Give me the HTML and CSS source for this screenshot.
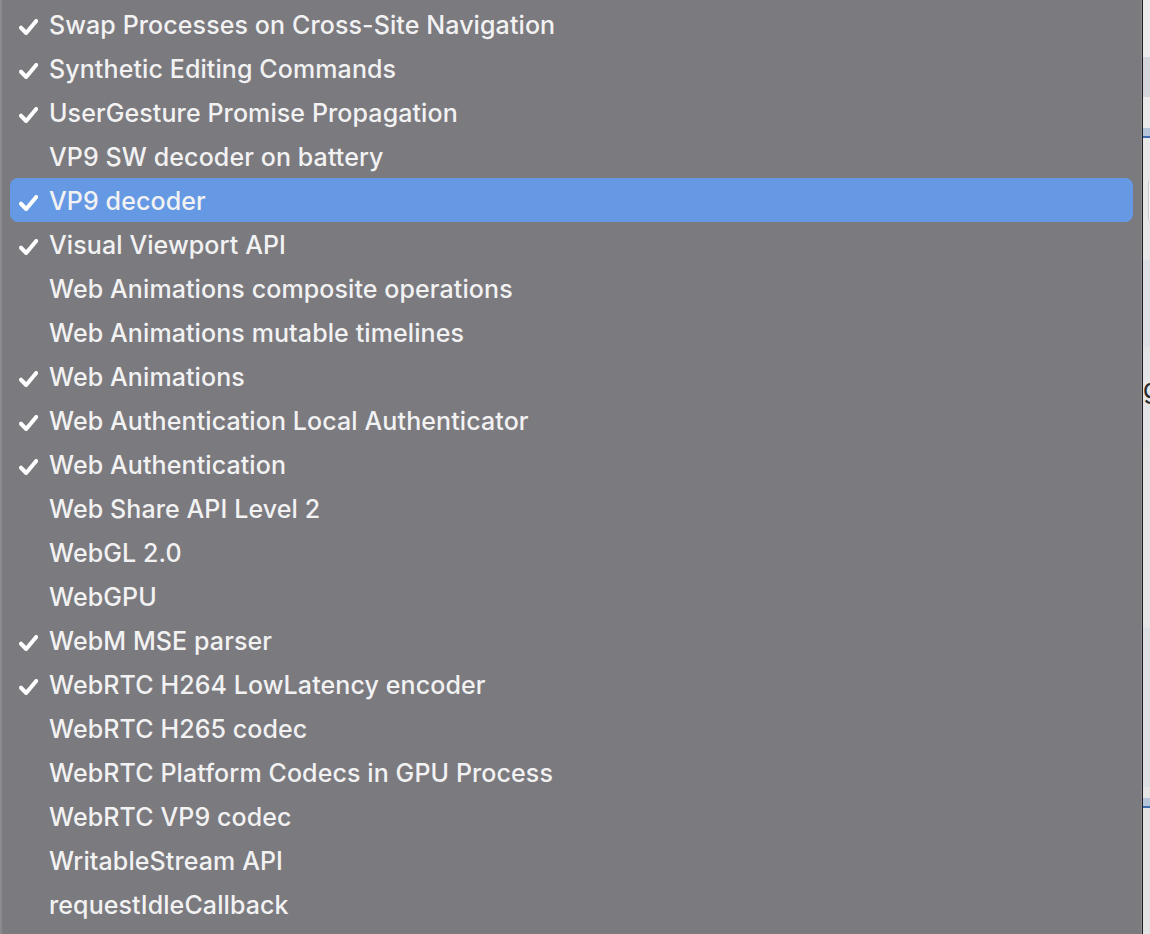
FILE: index.html
```html
<!DOCTYPE html>
<html>
<head>
<meta charset="utf-8">
<link rel="stylesheet" href="styles.css">
</head>
<body>
<div class="screen">
  <div class="menu">
    <ul class="items">
      <li class="item"><span class="check"><svg viewBox="0 0 18 15"><path d="M1.9 8.2 L6.8 13.2 L16.3 1.8"/></svg></span><span class="label">Swap Processes on Cross-Site Navigation</span></li>
      <li class="item"><span class="check"><svg viewBox="0 0 18 15"><path d="M1.9 8.2 L6.8 13.2 L16.3 1.8"/></svg></span><span class="label">Synthetic Editing Commands</span></li>
      <li class="item"><span class="check"><svg viewBox="0 0 18 15"><path d="M1.9 8.2 L6.8 13.2 L16.3 1.8"/></svg></span><span class="label">UserGesture Promise Propagation</span></li>
      <li class="item"><span class="check"></span><span class="label">VP9 SW decoder on battery</span></li>
      <li class="item selected"><span class="check"><svg viewBox="0 0 18 15"><path d="M1.9 8.2 L6.8 13.2 L16.3 1.8"/></svg></span><span class="label">VP9 decoder</span></li>
      <li class="item"><span class="check"><svg viewBox="0 0 18 15"><path d="M1.9 8.2 L6.8 13.2 L16.3 1.8"/></svg></span><span class="label">Visual Viewport API</span></li>
      <li class="item"><span class="check"></span><span class="label">Web Animations composite operations</span></li>
      <li class="item"><span class="check"></span><span class="label">Web Animations mutable timelines</span></li>
      <li class="item"><span class="check"><svg viewBox="0 0 18 15"><path d="M1.9 8.2 L6.8 13.2 L16.3 1.8"/></svg></span><span class="label">Web Animations</span></li>
      <li class="item"><span class="check"><svg viewBox="0 0 18 15"><path d="M1.9 8.2 L6.8 13.2 L16.3 1.8"/></svg></span><span class="label">Web Authentication Local Authenticator</span></li>
      <li class="item"><span class="check"><svg viewBox="0 0 18 15"><path d="M1.9 8.2 L6.8 13.2 L16.3 1.8"/></svg></span><span class="label">Web Authentication</span></li>
      <li class="item"><span class="check"></span><span class="label">Web Share API Level 2</span></li>
      <li class="item"><span class="check"></span><span class="label">WebGL 2.0</span></li>
      <li class="item"><span class="check"></span><span class="label">WebGPU</span></li>
      <li class="item"><span class="check"><svg viewBox="0 0 18 15"><path d="M1.9 8.2 L6.8 13.2 L16.3 1.8"/></svg></span><span class="label">WebM MSE parser</span></li>
      <li class="item"><span class="check"><svg viewBox="0 0 18 15"><path d="M1.9 8.2 L6.8 13.2 L16.3 1.8"/></svg></span><span class="label">WebRTC H264 LowLatency encoder</span></li>
      <li class="item"><span class="check"></span><span class="label">WebRTC H265 codec</span></li>
      <li class="item"><span class="check"></span><span class="label">WebRTC Platform Codecs in GPU Process</span></li>
      <li class="item"><span class="check"></span><span class="label">WebRTC VP9 codec</span></li>
      <li class="item"><span class="check"></span><span class="label">WritableStream API</span></li>
      <li class="item"><span class="check"></span><span class="label">requestIdleCallback</span></li>
    </ul>
  </div>
  <div class="backdrop">
    <div class="bd-a"></div>
    <div class="bd-b"></div>
    <div class="bd-c"></div>
    <div class="bd-tab"></div>
    <div class="bd-d"><span class="bd-btn"></span></div>
    <div class="bd-e"></div>
    <div class="bd-f"><span class="bd-glyph">g</span></div>
    <div class="bd-g"></div>
    <div class="bd-h"></div>
    <div class="bd-i"></div>
    <div class="bd-tab"></div>
    <div class="bd-j"></div>
  </div>
</div>
</body>
</html>
```
FILE: styles.css
```css
html, body {
  margin: 0;
  padding: 0;
  height: 100%;
  overflow: hidden;
}
body {
  font-family: Inter, "Helvetica Neue", "Liberation Sans", sans-serif;
  background: #e6e6e6;
}
.screen {
  display: flex;
  width: 1150px;
  height: 934px;
}
.menu {
  width: 1139px;
  flex: none;
  background: #7b7a7f;
  border-left: 2px solid #8b8a8f;
  border-right: 1px solid #8e8d92;
  box-shadow: 1px 0 0 #1c1c1e;
  position: relative;
  z-index: 1;
}
.items {
  list-style: none;
  margin: 0;
  padding: 2px 8px 0 8px;
}
.item {
  height: 44px;
  display: flex;
  align-items: center;
  border-radius: 8px;
  color: #f2f2f3;
  font-size: 25px;
  font-weight: 500;
  letter-spacing: 0.1px;
}
.item.selected {
  background: #6699e3;
}
.check {
  width: 39px;
  flex: none;
  display: flex;
  align-items: center;
  padding-left: 9px;
  padding-top: 5px;
  box-sizing: border-box;
}
.check svg {
  flex: none;
  width: 19px;
  height: 16px;
  fill: none;
  stroke: #ffffff;
  stroke-width: 3.8;
  stroke-linecap: round;
  stroke-linejoin: round;
}
.label {
  white-space: nowrap;
  padding-top: 2px;
}
.backdrop {
  flex: 1;
  margin-left: 1px;
  display: flex;
  flex-direction: column;
  background: #e8e8e8;
}
.bd-a { height: 57px; background: #ececec; }
.bd-b { height: 40px; background: #d3d6db; }
.bd-c { height: 31px; background: #eaeaea; }
.bd-tab { height: 8px; background: #b5c5da; border-bottom: 2px solid #3c6eb0; }
.bd-d { height: 122px; background: #e8e8e8; position: relative; }
.bd-btn { position: absolute; left: 5px; top: 42px; width: 4px; height: 42px; background: #f6f6f6; border-left: 1px solid #c8c8c8; border-radius: 4px 0 0 4px; }
.bd-e { height: 87px; background: #dde0e4; }
.bd-f { height: 98px; background: #e3e5e7; overflow: hidden; }
.bd-glyph { display: block; margin-top: 26px; margin-left: 0; font-size: 26px; color: #2a2a2a; }
.bd-g { height: 183px; background: #e6e6e6; }
.bd-h { height: 159px; background: #dee1e4; }
.bd-i { height: 11px; background: #e6e6e6; }
.bd-j { flex: 1; background: #e4e4e4; }
```
